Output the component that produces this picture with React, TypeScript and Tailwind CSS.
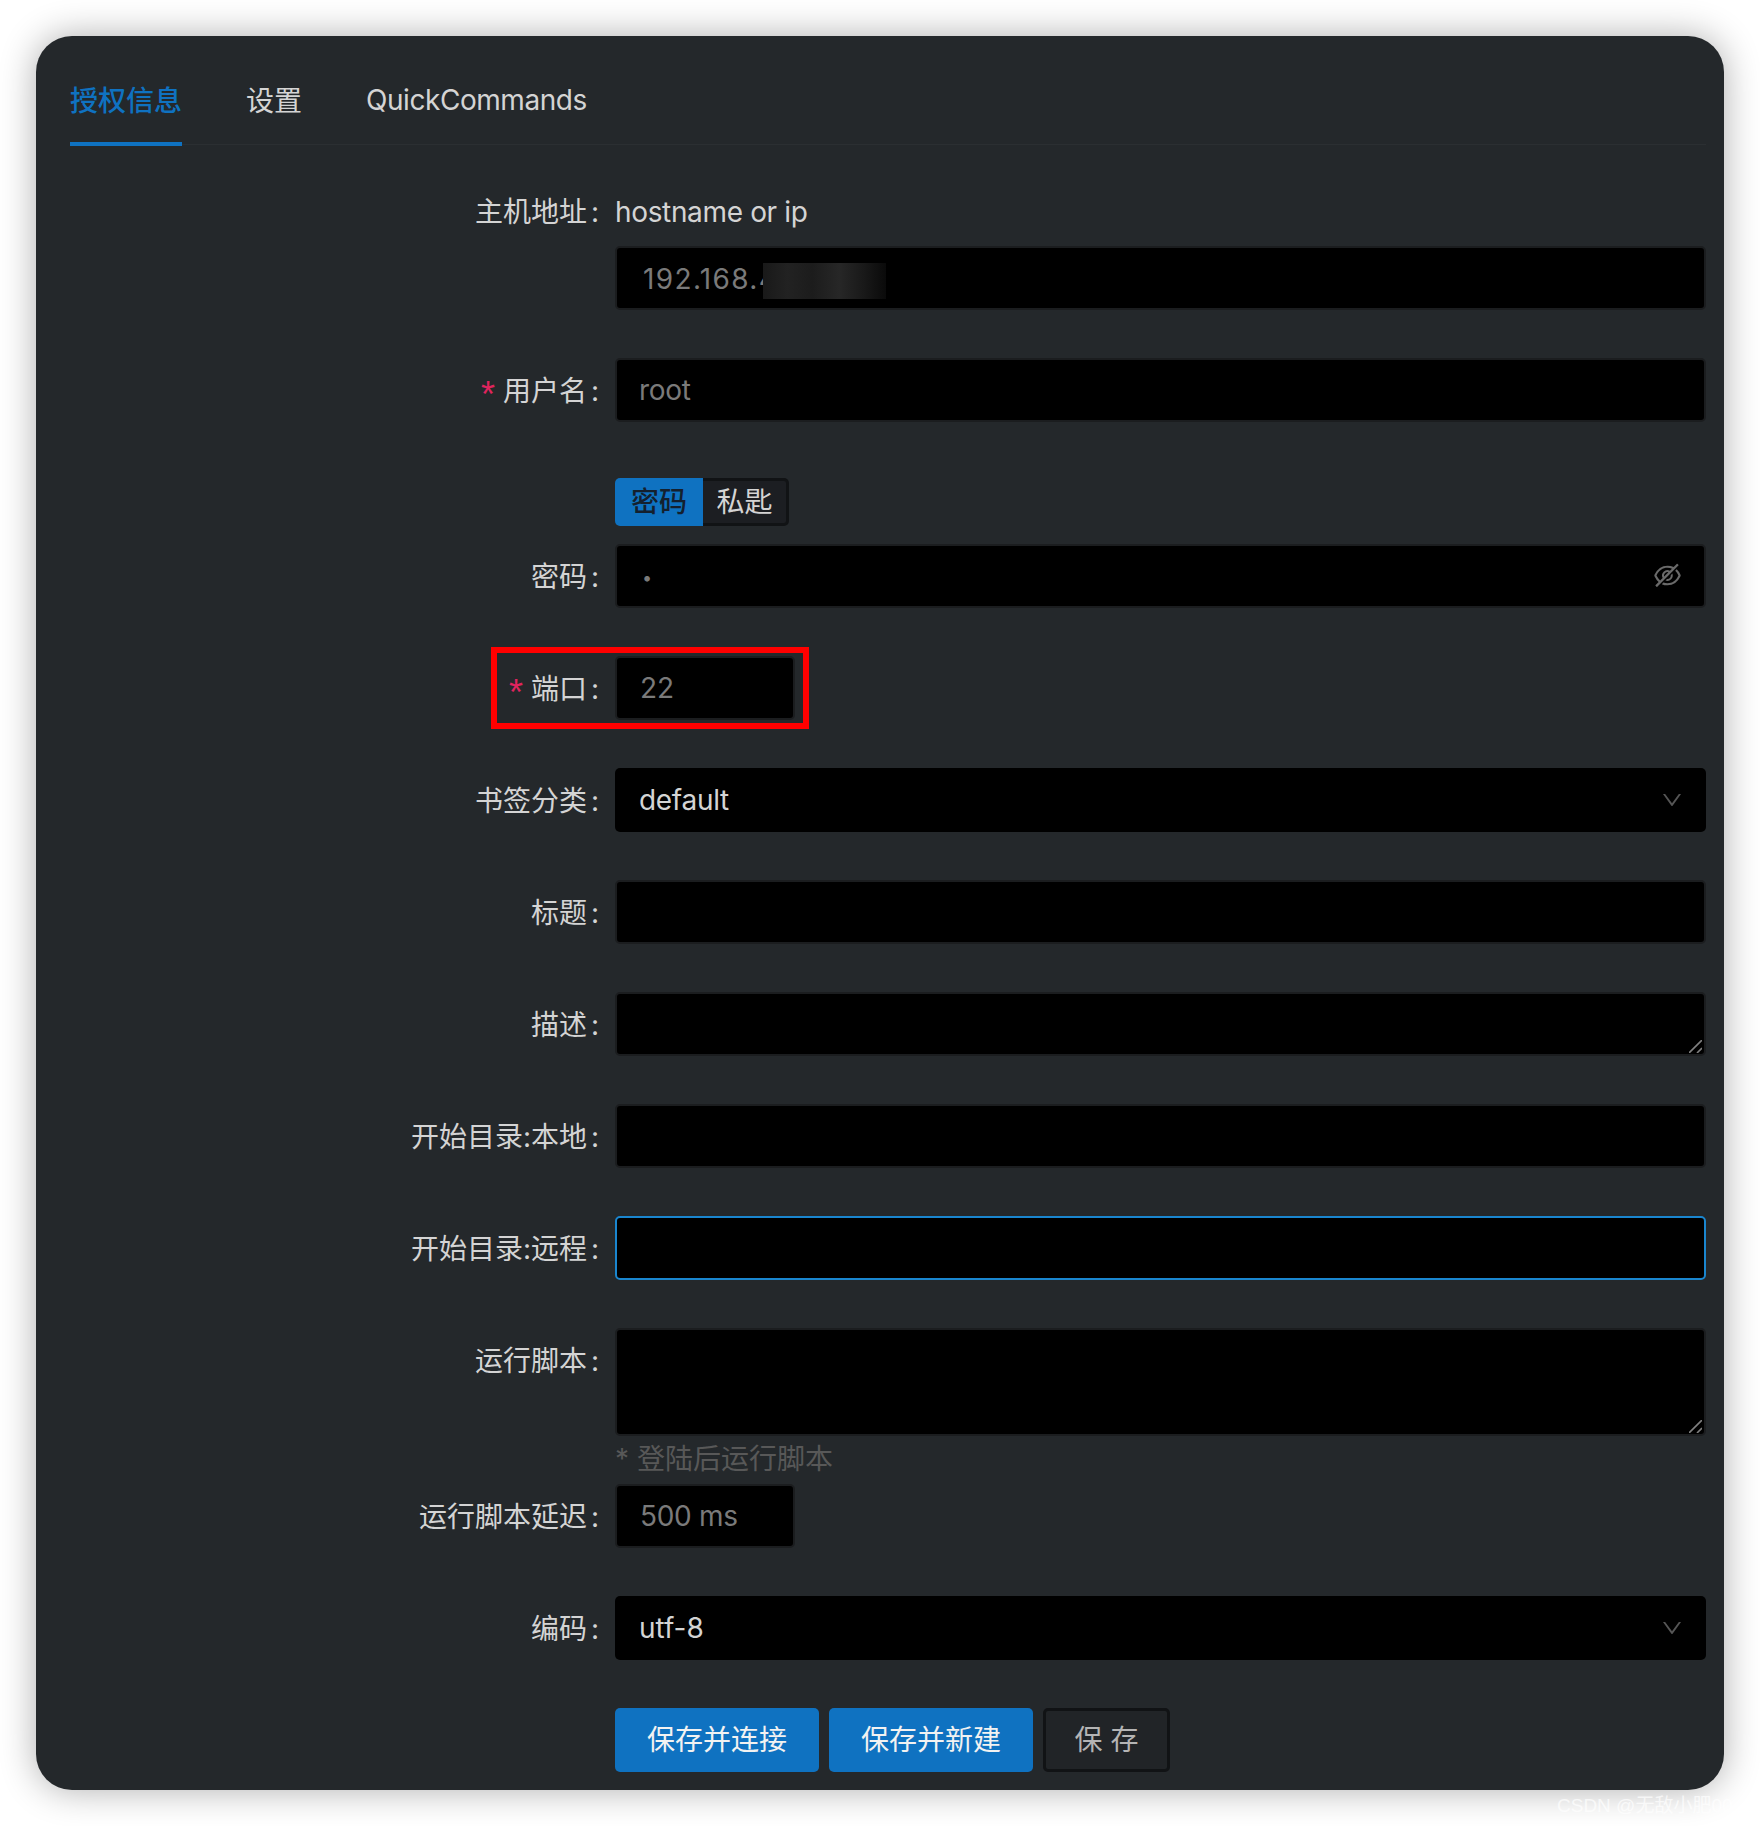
import React from "react";
import { AiOutlineEyeInvisible, AiOutlineDown } from "react-icons/ai";

const inputCls =
  "block w-full h-16 rounded-[5px] border-2 border-[#1b1d1f] bg-black pl-[23px] pr-5 text-[28px] text-[#7a7a7a] placeholder:text-[#7a7a7a] outline-none";

function Label({ text, required }: { text: string; required?: boolean }) {
  return (
    <div className="flex h-16 w-[545px] shrink-0 items-center justify-end pr-[14px] pt-[2px] text-[28px] text-[#d4d4d4]">
      {required && <span className="mb-[6px] mr-[8px] h-[22px] text-[36px] leading-[36px] text-[#e0245e] [font-family:'Liberation_Sans',sans-serif]">*</span>}
      <span>{text}</span>
      <span className="ml-[2px] w-[12px] text-center">:</span>
    </div>
  );
}

function Row({ label, required, children, mb = "mb-12" }: { label?: string; required?: boolean; children: React.ReactNode; mb?: string }) {
  return (
    <div className={`flex ${mb}`}>
      {label ? <Label text={label} required={required} /> : <div className="w-[545px] shrink-0" />}
      <div className="min-w-0 flex-1">{children}</div>
    </div>
  );
}

function Select({ value, tight }: { value: string; tight?: boolean }) {
  return (
    <div className="flex h-16 items-center justify-between rounded-[5px] bg-black pl-6 pr-[22px] text-[28px] text-[#d4d4d4]">
      <span className={tight ? "tracking-[-0.3px]" : ""}>{value}</span>
      <AiOutlineDown className="text-[#555555]" size={24} />
    </div>
  );
}

function Grip() {
  return (
    <svg className="pointer-events-none absolute bottom-[3px] right-[4px]" width="13" height="13" viewBox="0 0 13 13" fill="none" stroke="#808080" strokeWidth="1.6">
      <path d="M0 13 13 0M8 13l5-5" />
    </svg>
  );
}

export default function App() {
  return (
    <div className="relative h-[1826px] w-[1760px] overflow-hidden bg-white pt-9 pl-9 [font-family:Inter,'Noto_Sans_CJK_SC',sans-serif]">
      <div className="h-[1754px] w-[1688px] rounded-[36px] bg-[#24282b] pl-[34px] pr-[18px] shadow-[0_0_36px_rgba(0,0,0,0.32)]">
        <div className="flex h-[109px] gap-[64px] border-b border-[#2b2f32] text-[28px] leading-9">
          <div className="h-[110px] border-b-4 border-[#0f72c1] pt-[47px] font-medium text-[#0f72c1]">授权信息</div>
          <div className="h-[110px] pt-[47px] text-[#d4d4d4]">设置</div>
          <div className="h-[110px] pt-[46px] tracking-[-0.45px] text-[#d4d4d4]">QuickCommands</div>
        </div>

        <form className="mt-[45px]">
          <div className="mb-12 flex">
            <div className="flex h-11 w-[545px] shrink-0 items-center justify-end pr-[14px] text-[28px] text-[#d4d4d4]">
              <span>主机地址</span>
              <span className="ml-[2px] w-[12px] text-center">:</span>
            </div>
            <div className="min-w-0 flex-1">
              <div className="mb-3 h-11 text-[28px] leading-[44px] tracking-[-0.35px] text-[#d4d4d4]">hostname or ip</div>
              <div className="relative">
                <input className={`${inputCls} !pl-[26px] pt-[1px] tracking-[1.35px]`} defaultValue="192.168.4" />
                <div className="absolute left-[148px] top-[17px] h-9 w-[123px] bg-[linear-gradient(90deg,#191919,#222222_20%,#1c1c1c_40%,#272727_62%,#191919_82%,#0a0a0a_100%)]" />
              </div>
            </div>
          </div>

          <Row label="用户名" required>
            <input className={`${inputCls} !pl-[22px] tracking-[-0.3px]`} placeholder="root" />
          </Row>

          <Row mb="mb-[18px]">
            <div className="mt-2 flex h-12 w-fit text-[28px] leading-[48px]">
              <div className="w-[88px] rounded-l-[5px] bg-[#0f72c1] text-center font-medium text-[#14202e]">密码</div>
              <div className="w-[86px] rounded-r-[5px] border-[3px] border-l-0 border-[#111315] bg-[#1c1e22] text-center leading-[42px] text-[#d4d4d4]">私匙</div>
            </div>
          </Row>

          <Row label="密码">
            <div className="relative">
              <input className={`${inputCls} !pl-[25px] pt-[3px] !text-[18px]`} defaultValue="•" />
              <AiOutlineEyeInvisible className="absolute right-[23px] top-[16px] text-[#6a6a6a]" size={31} />
            </div>
          </Row>

          <div className="relative">
            <div className="pointer-events-none absolute left-[421px] top-[-9px] h-[82px] w-[318px] border-[6px] border-[#ff0000]" />
            <Row label="端口" required>
              <input className={`${inputCls} !w-[180px]`} defaultValue="22" />
            </Row>
          </div>

          <Row label="书签分类">
            <Select value="default" tight />
          </Row>

          <Row label="标题">
            <input className={inputCls} />
          </Row>

          <Row label="描述">
            <div className="relative">
              <textarea className={`${inputCls} resize-none`} />
              <Grip />
            </div>
          </Row>

          <Row label="开始目录:本地">
            <input className={inputCls} />
          </Row>

          <Row label="开始目录:远程">
            <input className={`${inputCls} !border-[#1a86cf]`} />
          </Row>

          <Row label="运行脚本" mb="mb-0">
            <div className="relative">
              <textarea className={`${inputCls} !h-[108px] resize-none`} />
              <Grip />
            </div>
            <div className="h-12 pt-[1px] text-[28px] leading-[44px] text-[#585858]">* 登陆后运行脚本</div>
          </Row>

          <Row label="运行脚本延迟">
            <input className={`${inputCls} !w-[180px] tracking-[-0.3px]`} defaultValue="500 ms" />
          </Row>

          <Row label="编码">
            <Select value="utf-8" />
          </Row>

          <Row mb="mb-0">
            <div className="flex gap-[10px] text-[28px]">
              <button type="button" className="h-16 w-[204px] rounded-[5px] bg-[#0f72c1] text-[#f2f2f2]">保存并连接</button>
              <button type="button" className="h-16 w-[204px] rounded-[5px] bg-[#0f72c1] text-[#f2f2f2]">保存并新建</button>
              <button type="button" className="h-16 w-[127px] rounded-[5px] border-[3px] border-[#111315] bg-[#212427] text-[#b4b4b4]">保 存</button>
            </div>
          </Row>
        </form>
      </div>
      <div className="absolute left-[1557px] top-[1795px] whitespace-nowrap text-[19px] leading-[22px] text-white/70 [font-family:'Liberation_Sans','Noto_Sans_CJK_SC',sans-serif]">
        CSDN @无敌小肥00
      </div>
    </div>
  );
}
